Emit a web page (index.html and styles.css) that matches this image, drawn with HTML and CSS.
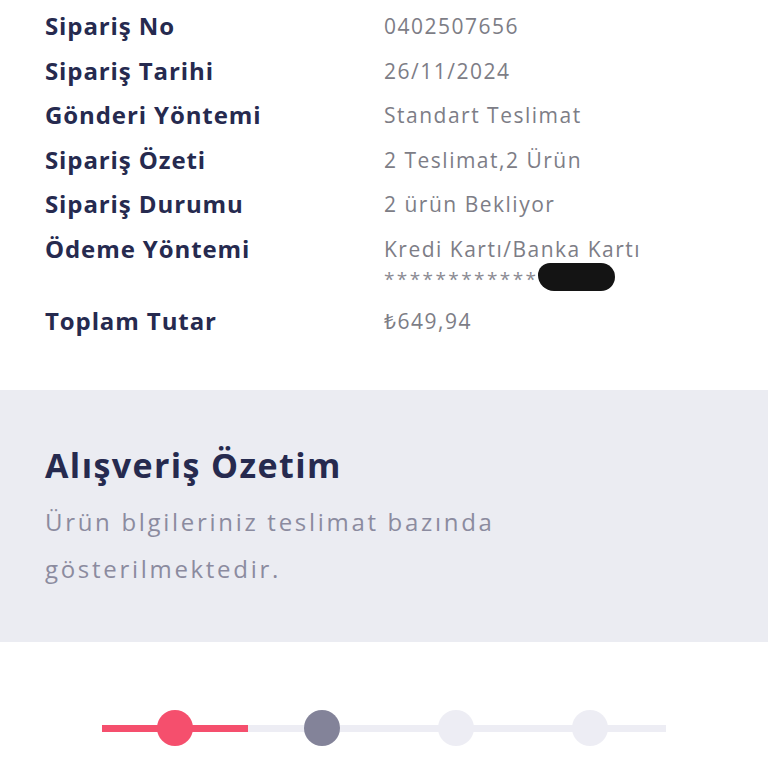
FILE: index.html
```html
<!DOCTYPE html>
<html lang="tr">
<head>
<meta charset="utf-8">
<link rel="stylesheet" href="styles.css">
</head>
<body>
<section class="details">
  <div class="row"><div class="label">Sipariş No</div><div class="value">0402507656</div></div>
  <div class="row"><div class="label">Sipariş Tarihi</div><div class="value">26/11/2024</div></div>
  <div class="row"><div class="label">Gönderi Yöntemi</div><div class="value">Standart Teslimat</div></div>
  <div class="row"><div class="label">Sipariş Özeti</div><div class="value">2 Teslimat,2 Ürün</div></div>
  <div class="row"><div class="label">Sipariş Durumu</div><div class="value">2 ürün Bekliyor</div></div>
  <div class="row row-pay"><div class="label">Ödeme Yöntemi</div><div class="value">Kredi Kartı/Banka Kartı<div class="masked">************<span class="blot"></span></div></div></div>
  <div class="row"><div class="label">Toplam Tutar</div><div class="value">₺649,94</div></div>
</section>
<section class="summary">
  <h2 class="summary-title">Alışveriş Özetim</h2>
  <p class="summary-text">Ürün blgileriniz teslimat bazında gösterilmektedir.</p>
</section>
<section class="stepper">
  <div class="track"></div>
  <div class="track-fill"></div>
  <div class="steps">
    <span class="dot dot-active"></span>
    <span class="dot dot-current"></span>
    <span class="dot"></span>
    <span class="dot"></span>
  </div>
</section>
</body>
</html>
```
FILE: styles.css
```css
html, body {
  margin: 0;
  padding: 0;
  background: #ffffff;
}
body {
  font-family: "Open Sans", "Liberation Sans", sans-serif;
  width: 768px;
  height: 768px;
  overflow: hidden;
}
.details {
  padding: 4px 0 0 45px;
}
.row {
  display: grid;
  grid-template-columns: 339px 1fr;
  min-height: 44.6px;
}
.label {
  font-size: 24px;
  font-weight: 700;
  color: #262a4f;
  line-height: 44.6px;
  letter-spacing: 0.9px;
  white-space: nowrap;
}
.value {
  font-size: 21px;
  font-weight: 400;
  color: #7d7d86;
  line-height: 44.6px;
  letter-spacing: 1.5px;
  white-space: nowrap;
}
.row-pay {
  padding-bottom: 11px;
}
.masked {
  position: relative;
  line-height: 18px;
  margin-top: -2px;
  font-size: 19px;
  letter-spacing: 2.4px;
  color: #8a8a92;
  height: 18px;
}
.blot {
  position: absolute;
  left: 154px;
  top: -7px;
  width: 77px;
  height: 28px;
  border-radius: 12px 14px 14px 16px;
  background: #141414;
}
.summary {
  margin-top: 47px;
  background: #ebecf2;
  padding: 55px 45px 50px;
}
.summary-title {
  margin: 0;
  font-size: 34px;
  line-height: 40px;
  font-weight: 700;
  letter-spacing: 1.4px;
  color: #262a4f;
}
.summary-text {
  margin: 13px 0 0;
  font-size: 24px;
  line-height: 47px;
  color: #8b8b9f;
  letter-spacing: 2.7px;
  width: 560px;
}
.stepper {
  position: relative;
  margin: 68px 0 0 102px;
  width: 564px;
  height: 36px;
}
.track {
  position: absolute;
  left: 0;
  right: 0;
  top: 15px;
  height: 7px;
  background: #ededf4;
}
.track-fill {
  position: absolute;
  left: 0;
  top: 15px;
  width: 146px;
  height: 7px;
  background: #f54f6d;
}
.steps {
  position: relative;
  display: flex;
  gap: 98px;
  padding-left: 55px;
}
.dot {
  width: 36px;
  height: 36px;
  border-radius: 50%;
  background: #ededf4;
}
.dot-active {
  background: #f54f6d;
  margin-right: 13px;
}
.dot-current {
  background: #838399;
}
```
